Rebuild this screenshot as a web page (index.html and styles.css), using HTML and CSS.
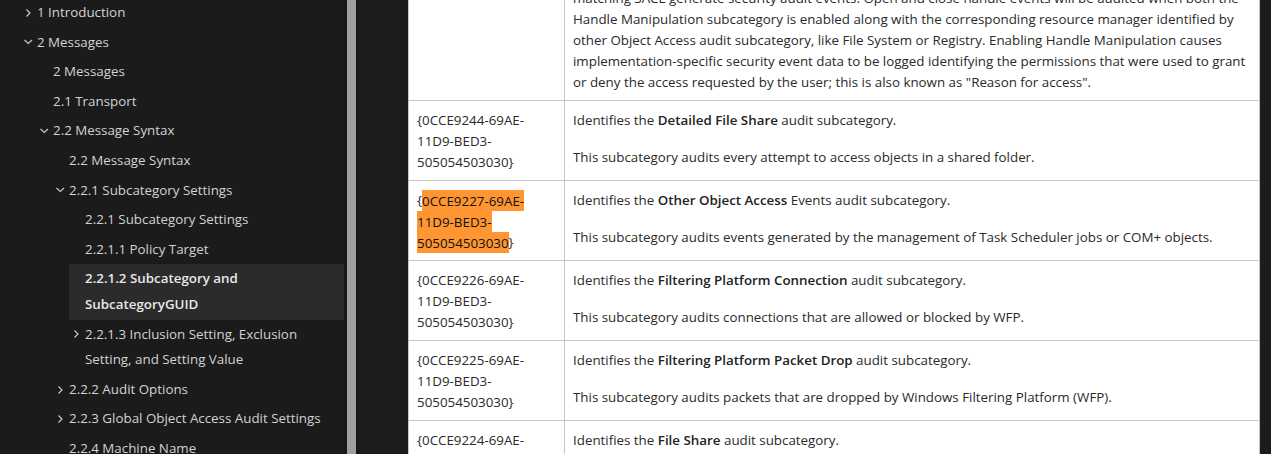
FILE: index.html
```html
<!DOCTYPE html>
<html lang="en">
<head>
<meta charset="utf-8">
<title>Subcategory and SubcategoryGUID</title>
<link rel="stylesheet" href="styles.css">
</head>
<body>
<div class="app">
  <aside class="sidebar">
    <ul class="toc">
      <li class="item l1"><span class="chev"><svg viewBox="0 0 16 16"><polyline points="5.5,4.5 9,8 5.5,11.5"/></svg></span><span class="label">1 Introduction</span></li>
      <li class="item l1"><span class="chev"><svg viewBox="0 0 16 16"><polyline points="3.5,6 7.25,9.5 11,6"/></svg></span><span class="label">2 Messages</span></li>
      <li class="item l2"><span class="chev"></span><span class="label">2 Messages</span></li>
      <li class="item l2"><span class="chev"></span><span class="label">2.1 Transport</span></li>
      <li class="item l2"><span class="chev"><svg viewBox="0 0 16 16"><polyline points="3.5,6 7.25,9.5 11,6"/></svg></span><span class="label">2.2 Message Syntax</span></li>
      <li class="item l3"><span class="chev"></span><span class="label">2.2 Message Syntax</span></li>
      <li class="item l3"><span class="chev"><svg viewBox="0 0 16 16"><polyline points="3.5,6 7.25,9.5 11,6"/></svg></span><span class="label">2.2.1 Subcategory Settings</span></li>
      <li class="item l4"><span class="chev"></span><span class="label">2.2.1 Subcategory Settings</span></li>
      <li class="item l4"><span class="chev"></span><span class="label">2.2.1.1 Policy Target</span></li>
      <li class="item l4 active"><span class="chev"></span><span class="label">2.2.1.2 Subcategory and SubcategoryGUID</span></li>
      <li class="item l4"><span class="chev"><svg viewBox="0 0 16 16"><polyline points="5.5,4.5 9,8 5.5,11.5"/></svg></span><span class="label">2.2.1.3 Inclusion Setting, Exclusion Setting, and Setting Value</span></li>
      <li class="item l3"><span class="chev"><svg viewBox="0 0 16 16"><polyline points="5.5,4.5 9,8 5.5,11.5"/></svg></span><span class="label">2.2.2 Audit Options</span></li>
      <li class="item l3"><span class="chev"><svg viewBox="0 0 16 16"><polyline points="5.5,4.5 9,8 5.5,11.5"/></svg></span><span class="label">2.2.3 Global Object Access Audit Settings</span></li>
      <li class="item l3"><span class="chev"></span><span class="label">2.2.4 Machine Name</span></li>
    </ul>
  </aside>
  <div class="scrollbar"><div class="thumb"></div></div>
  <main class="main">
    <table class="guid-table">
      <colgroup><col class="col-guid"><col class="col-desc"></colgroup>
      <tbody>
        <tr>
          <td class="guid">{0CCE9223-69AE-11D9-BED3-505054503030}</td>
          <td class="desc">
            <p>Identifies the <b>Handle Manipulation</b> audit subcategory.</p>
            <p class="pre">This subcategory audits events generated when a handle to an object is opened or closed. Only objects with a<br>matching SACL generate security audit events. Open and close handle events will be audited when both the<br>Handle Manipulation subcategory is enabled along with the corresponding resource manager identified by<br>other Object Access audit subcategory, like File System or Registry. Enabling Handle Manipulation causes<br>implementation-specific security event data to be logged identifying the permissions that were used to grant<br>or deny the access requested by the user; this is also known as "Reason for access".</p>
          </td>
        </tr>
        <tr>
          <td class="guid">{0CCE9244-69AE-11D9-BED3-505054503030}</td>
          <td class="desc">
            <p>Identifies the <b>Detailed File Share</b> audit subcategory.</p>
            <p>This subcategory audits every attempt to access objects in a shared folder.</p>
          </td>
        </tr>
        <tr>
          <td class="guid">{<span class="find">0CCE9227-69AE-11D9-BED3-505054503030</span>}</td>
          <td class="desc">
            <p>Identifies the <b>Other Object Access</b> Events audit subcategory.</p>
            <p>This subcategory audits events generated by the management of Task Scheduler jobs or COM+ objects.</p>
          </td>
        </tr>
        <tr>
          <td class="guid">{0CCE9226-69AE-11D9-BED3-505054503030}</td>
          <td class="desc">
            <p>Identifies the <b>Filtering Platform Connection</b> audit subcategory.</p>
            <p>This subcategory audits connections that are allowed or blocked by WFP.</p>
          </td>
        </tr>
        <tr>
          <td class="guid">{0CCE9225-69AE-11D9-BED3-505054503030}</td>
          <td class="desc">
            <p>Identifies the <b>Filtering Platform Packet Drop</b> audit subcategory.</p>
            <p>This subcategory audits packets that are dropped by Windows Filtering Platform (WFP).</p>
          </td>
        </tr>
        <tr>
          <td class="guid">{0CCE9224-69AE-11D9-BED3-505054503030}</td>
          <td class="desc">
            <p>Identifies the <b>File Share</b> audit subcategory.</p>
            <p>This subcategory audits attempts to access a shared folder.</p>
          </td>
        </tr>
      </tbody>
    </table>
  </main>
</div>
</body>
</html>
```

FILE: styles.css
```css
html, body {
  margin: 0;
  height: 100%;
}

body {
  background: #1c1c1c;
  font-family: "Open Sans", "Noto Sans", sans-serif;
  font-size: 13.35px;
  overflow: hidden;
}

.app {
  display: flex;
  height: 454px;
  overflow: hidden;
}

/* ---------- sidebar ---------- */
.sidebar {
  width: 344px;
  flex: none;
  background: #1b1b1b;
  color: #d2d2d2;
  overflow: hidden;
}

.toc {
  list-style: none;
  margin: -2px 0 0;
  padding: 0;
}

.item {
  display: flex;
  align-items: flex-start;
  padding: 2px 0;
  line-height: 25.6px;
}

.l1 { margin-left: 21px; }
.l2 { margin-left: 37px; }
.l3 { margin-left: 53px; }
.l4 { margin-left: 69px; }

.chev {
  width: 16px;
  height: 25.6px;
  flex: none;
  display: flex;
  align-items: center;
}

.chev svg {
  width: 16px;
  height: 16px;
  fill: none;
  stroke: #c8c8c8;
  stroke-width: 1.2;
}

.label {
  flex: 1;
  min-width: 0;
  padding-right: 4px;
}

.active {
  background: #2b2b2b;
  color: #e8e8e8;
  font-weight: 600;
}

/* ---------- scrollbar ---------- */
.scrollbar {
  width: 15px;
  flex: none;
  box-sizing: border-box;
  padding: 0 3px;
  background: #171717;
}

.thumb {
  height: 100%;
  background: #9f9f9f;
}

/* ---------- content ---------- */
.main {
  flex: 1;
  min-width: 0;
  padding-left: 49px;
  background: #1c1c1c;
  overflow: hidden;
}

.guid-table {
  border-collapse: collapse;
  table-layout: fixed;
  width: 852px;
  margin-top: -80px;
  background: #ffffff;
  color: #2a2a2a;
  line-height: 21px;
}

.col-guid { width: 156px; }

.guid-table td {
  border: 1px solid #c6c6c6;
  padding: 9px 8px 7px;
  vertical-align: top;
}

.guid-table p {
  margin: 0 0 16px;
}

.guid-table p:last-child {
  margin-bottom: 0;
}

.guid-table b {
  font-weight: 600;
  color: #222222;
}

.pre {
  white-space: nowrap;
}

.find {
  background: #ff9632;
  color: #111111;
  padding: 1.5px 0;
}
```
